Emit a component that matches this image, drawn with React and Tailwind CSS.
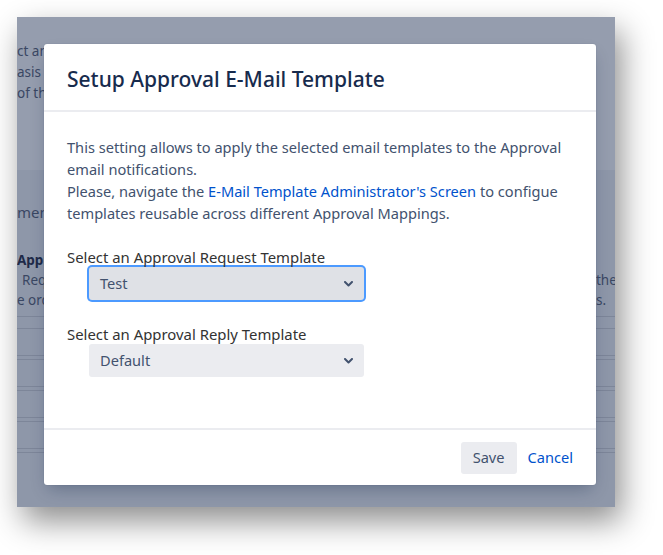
import React from 'react';

const font = { fontFamily: '"Noto Sans", "Open Sans", sans-serif' };

function Chevron() {
  return (
    <svg width="9" height="6" viewBox="0 0 9 6" fill="none">
      <path d="M1 1l3.5 3.5L8 1" stroke="#42526e" strokeWidth="2" strokeLinecap="round" strokeLinejoin="round" />
    </svg>
  );
}

function Select({ value, focused }) {
  return (
    <div
      className={
        'ml-[22px] w-[275px] h-[33px] rounded-[3px] flex items-center justify-between pl-[11px] pr-[11px] text-[14.6px] text-[#42526e] ' +
        (focused ? 'bg-[#dfe1e6] ring-2 ring-[#4c9aff]' : 'bg-[#ebecf0]')
      }
    >
      <span>{value}</span>
      <Chevron />
    </div>
  );
}

export default function App() {
  return (
    <div className="w-[663px] h-[555px] bg-white pt-[17px] pl-[17px]" style={font}>
      <div className="relative w-[598px] h-[490px] overflow-hidden bg-[#8e97a9] shadow-[6px_14px_30px_rgba(0,0,0,0.45)]">
        {/* page under the blanket */}
        <div className="h-[153px] bg-[#959dae] pt-[24px] text-[13.5px] leading-[21px] text-[#3a4763] whitespace-nowrap">
          <div className="w-[27px] overflow-hidden">
            <div>ct an</div>
            <div>asis</div>
            <div>of th</div>
          </div>
        </div>
        <div className="whitespace-nowrap text-[#3a4763]">
          <div className="w-[27px] overflow-hidden">
            <div className="pt-[32px] text-[15px] leading-[20px]">ment</div>
            <div className="pt-[28px] text-[13.5px] leading-[20px] font-bold text-[#1e2a48]">Appr</div>
          </div>
          <div className="flex justify-between text-[13.5px] leading-[20px]">
            <div className="w-[27px] overflow-hidden">
              <div className="pl-[5px]">Req</div>
              <div>e ord</div>
            </div>
            <div className="w-[19px] overflow-hidden">
              <div>the</div>
              <div>s.</div>
            </div>
          </div>
          <div className="mt-[6px] border-t border-[#7d8699] h-[12px]" />
          <div className="border-t border-[#7d8699] h-[27px]" />
          <div className="border-t border-[#7d8699] h-[4px]" />
          <div className="border-t border-[#7d8699] h-[27px]" />
          <div className="border-t border-[#7d8699] h-[4px]" />
          <div className="border-t border-[#7d8699] h-[27px]" />
          <div className="border-t border-[#7d8699] h-[4px]" />
          <div className="border-t border-[#7d8699] h-[27px]" />
          <div className="border-t border-[#7d8699] h-[4px]" />
          <div className="border-t border-[#7d8699] h-[28px] flex pl-[246px]">
            <div className="w-[4px] border-l border-r border-[#7d8699]" />
          </div>
        </div>

        {/* modal */}
        <div className="absolute left-[27px] top-[27px] w-[552px] h-[441px] bg-white rounded-[3px] shadow-[0_8px_16px_-4px_rgba(9,30,66,0.3),0_0_1px_rgba(9,30,66,0.31)] flex flex-col">
          <div className="h-[68px] pt-[6px] px-[23px] flex items-center border-b-2 border-[#ebecf0]">
            <h2 className="text-[21px] font-medium text-[#172b4d]">Setup Approval E-Mail Template</h2>
          </div>
          <div className="flex-1 px-[23px] pt-[24px]">
            <p className="text-[14.6px] leading-[22px] text-[#42526e] whitespace-nowrap">
              This setting allows to apply the selected email templates to the Approval
              <br />
              email notifications.
              <br />
              Please, navigate the <a className="text-[#0052cc]">E-Mail Template Administrator's Screen</a> to configue
              <br />
              templates reusable across different Approval Mappings.
            </p>
            <div className="mt-[23px] text-[14.9px] leading-[20px] text-[#333333]">Select an Approval Request Template</div>
            <Select value="Test" focused />
            <div className="mt-[24px] text-[14.9px] leading-[20px] text-[#333333]">Select an Approval Reply Template</div>
            <Select value="Default" />
          </div>
          <div className="h-[57px] border-t-2 border-[#ebecf0] flex items-center justify-end pr-[23px] gap-[11px] text-[14.6px]">
            <button className="h-[32px] w-[56px] rounded-[3px] bg-[#ebecf0] text-[#42526e]">Save</button>
            <button className="h-[32px] text-[#0052cc]">Cancel</button>
          </div>
        </div>
      </div>
    </div>
  );
}
